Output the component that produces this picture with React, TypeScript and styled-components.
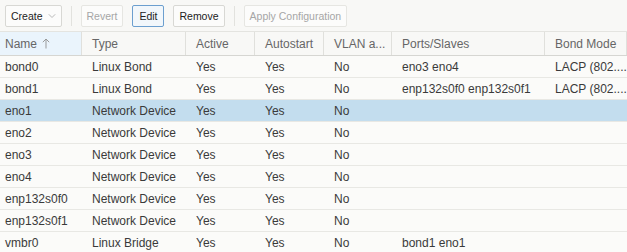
import React from "react";
import styled, { createGlobalStyle } from "styled-components";

const Global = createGlobalStyle`
  html, body { margin: 0; padding: 0; background: #f8f8f6; }
  body { font-family: "Liberation Sans", Arial, sans-serif; font-size: 12px; color: #3a3a3a; }
`;

const Page = styled.div`
  width: 627px;
  height: 252px;
  overflow: hidden;
  background: #f8f8f6;
`;

const Toolbar = styled.div`
  display: flex;
  align-items: center;
  height: 31px;
  padding: 0 0 0 5px;
  box-sizing: border-box;
  gap: 9px;
`;

const Button = styled.div<{ $disabled?: boolean; $focused?: boolean }>`
  display: flex;
  align-items: center;
  justify-content: center;
  gap: 5px;
  height: 22px;
  min-width: 32px;
  box-sizing: border-box;
  padding: 0 5px;
  font-size: 10.5px;
  border: 1px solid ${(p) => (p.$focused ? "#6c9fcf" : p.$disabled ? "#e6e6e2" : "#d8d8d4")};
  background: ${(p) => (p.$focused ? "#f2f7fb" : "#fcfcfb")};
  color: ${(p) => (p.$disabled ? "#a6a6a6" : "#222")};
  border-radius: 2px;
  white-space: nowrap;
`;

const Separator = styled.div`
  width: 1px;
  height: 20px;
  background: #e2e2de;
`;

const Chevron = () => (
  <svg width="8" height="6" viewBox="0 0 8 6" style={{ display: "block" }}>
    <path d="M0.8 1.3 L4 4.5 L7.2 1.3" fill="none" stroke="#b8b8b8" strokeWidth="1" />
  </svg>
);

const SortArrow = () => (
  <svg width="8" height="11" viewBox="0 0 8 11" style={{ display: "block" }}>
    <path d="M4 1 V10.5 M0.8 4.2 L4 1 L7.2 4.2" fill="none" stroke="#999" strokeWidth="1" />
  </svg>
);

const cols = "82px 104px 69px 69px 68px 153px 1fr";

const HeaderRow = styled.div`
  display: grid;
  grid-template-columns: ${cols};
  height: 25px;
  border-top: 1px solid #e4e4e0;
  border-bottom: 1px solid #d6d6d2;
  box-sizing: border-box;
`;

const HeaderCell = styled.div<{ $sorted?: boolean; $first?: boolean }>`
  display: flex;
  align-items: center;
  gap: 5px;
  padding-left: ${(p) => (p.$first ? "5px" : "10px")};
  color: #666;
  background: ${(p) => (p.$sorted ? "#eaf4fc" : "transparent")};
  border-right: 1px solid #e0e0dc;
  white-space: nowrap;
  overflow: hidden;
`;

const Row = styled.div<{ $selected?: boolean }>`
  display: grid;
  grid-template-columns: ${cols};
  height: 22px;
  box-sizing: border-box;
  border-bottom: 1px solid #e8e8e4;
  background: ${(p) => (p.$selected ? "#c3ddee" : "#fbfbf9")};
`;

const Cell = styled.div<{ $first?: boolean }>`
  display: flex;
  align-items: center;
  padding-left: ${(p) => (p.$first ? "5px" : "10px")};
  white-space: nowrap;
  overflow: hidden;
`;

const headers = ["Name", "Type", "Active", "Autostart", "VLAN a...", "Ports/Slaves", "Bond Mode"];

const rows: string[][] = [
  ["bond0", "Linux Bond", "Yes", "Yes", "No", "eno3 eno4", "LACP (802...."],
  ["bond1", "Linux Bond", "Yes", "Yes", "No", "enp132s0f0 enp132s0f1", "LACP (802...."],
  ["eno1", "Network Device", "Yes", "Yes", "No", "", ""],
  ["eno2", "Network Device", "Yes", "Yes", "No", "", ""],
  ["eno3", "Network Device", "Yes", "Yes", "No", "", ""],
  ["eno4", "Network Device", "Yes", "Yes", "No", "", ""],
  ["enp132s0f0", "Network Device", "Yes", "Yes", "No", "", ""],
  ["enp132s0f1", "Network Device", "Yes", "Yes", "No", "", ""],
  ["vmbr0", "Linux Bridge", "Yes", "Yes", "No", "bond1 eno1", ""],
];

export default function App() {
  return (
    <Page>
      <Global />
      <Toolbar>
        <Button>
          Create <Chevron />
        </Button>
        <Separator />
        <Button $disabled>Revert</Button>
        <Button $focused>Edit</Button>
        <Button>Remove</Button>
        <Separator />
        <Button $disabled>Apply Configuration</Button>
      </Toolbar>
      <HeaderRow>
        {headers.map((h, i) => (
          <HeaderCell key={h} $first={i === 0} $sorted={i === 0}>
            {h}
            {i === 0 && <SortArrow />}
          </HeaderCell>
        ))}
      </HeaderRow>
      {rows.map((r, ri) => (
        <Row key={r[0]} $selected={ri === 2}>
          {r.map((c, ci) => (
            <Cell key={ci} $first={ci === 0}>
              {c}
            </Cell>
          ))}
        </Row>
      ))}
    </Page>
  );
}
